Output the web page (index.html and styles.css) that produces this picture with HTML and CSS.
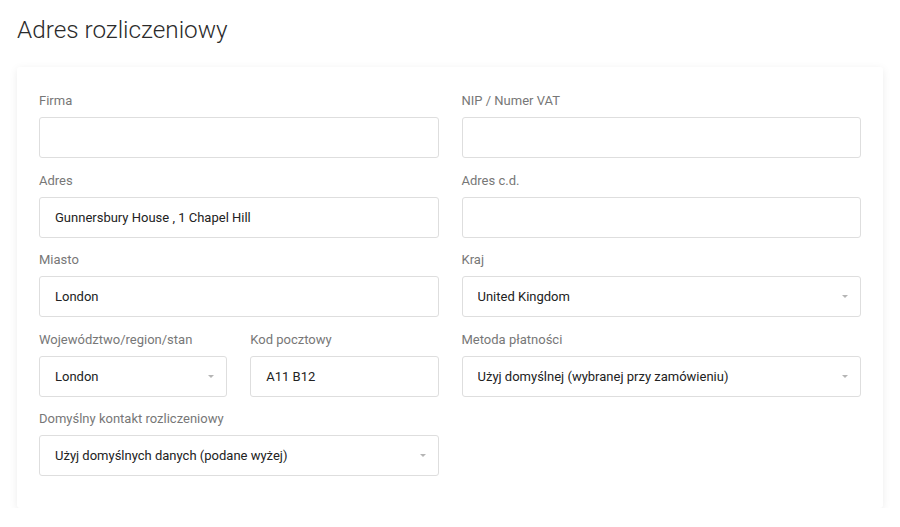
FILE: index.html
```html
<!DOCTYPE html>
<html lang="pl">
<head>
    <meta charset="UTF-8">
    <meta name="viewport" content="width=device-width, initial-scale=1.0">
    <title>Adres rozliczeniowy</title>
    <link rel="stylesheet" href="styles.css">
</head>
<body>
    <div class="page">
        <h1 class="page-title">Adres rozliczeniowy</h1>

        <form class="card billing-form">
            <div class="field">
                <label for="company">Firma</label>
                <input type="text" id="company">
            </div>
            <div class="field">
                <label for="vat">NIP / Numer VAT</label>
                <input type="text" id="vat">
            </div>

            <div class="field">
                <label for="address">Adres</label>
                <input type="text" id="address" value="Gunnersbury House , 1 Chapel Hill">
            </div>
            <div class="field">
                <label for="address2">Adres c.d.</label>
                <input type="text" id="address2">
            </div>

            <div class="field">
                <label for="city">Miasto</label>
                <input type="text" id="city" value="London">
            </div>
            <div class="field">
                <label for="country">Kraj</label>
                <div class="select">
                    <select id="country">
                        <option>United Kingdom</option>
                    </select>
                </div>
            </div>

            <div class="field-pair">
                <div class="field">
                    <label for="region">Województwo/region/stan</label>
                    <div class="select">
                        <select id="region">
                            <option>London</option>
                        </select>
                    </div>
                </div>
                <div class="field">
                    <label for="postcode">Kod pocztowy</label>
                    <input type="text" id="postcode" value="A11 B12">
                </div>
            </div>
            <div class="field">
                <label for="payment">Metoda płatności</label>
                <div class="select">
                    <select id="payment">
                        <option>Użyj domyślnej (wybranej przy zamówieniu)</option>
                    </select>
                </div>
            </div>

            <div class="field">
                <label for="contact">Domyślny kontakt rozliczeniowy</label>
                <div class="select">
                    <select id="contact">
                        <option>Użyj domyślnych danych (podane wyżej)</option>
                    </select>
                </div>
            </div>
        </form>
    </div>
</body>
</html>
```

FILE: styles.css
```css
body {
    font-family: Roboto, "Noto Sans", Arial, sans-serif;
    margin: 0;
    padding: 0;
    background-color: #fff;
    color: #222;
}

.page {
    padding: 14px 17px 0 17px;
    width: 866px;
}

.page-title {
    font-size: 24.3px;
    font-weight: 300;
    line-height: 32px;
    color: #2b2b2b;
    margin: 0 0 21px 0;
}

.card {
    background: #fff;
    border-radius: 3px;
    box-shadow: 0 2px 8px rgba(0, 0, 0, 0.08);
}

.billing-form {
    display: grid;
    grid-template-columns: 1fr 1fr;
    column-gap: 23px;
    row-gap: 12.5px;
    padding: 24px 22px 32px 22px;
}

.field-pair {
    display: grid;
    grid-template-columns: 1fr 1fr;
    column-gap: 23px;
}

.field label {
    display: block;
    font-size: 13px;
    line-height: 20px;
    color: #777;
    margin-bottom: 6px;
}

.field input,
.field select {
    display: block;
    box-sizing: border-box;
    width: 100%;
    height: 41px;
    padding: 0 15px;
    font-family: inherit;
    font-size: 13px;
    color: #222;
    background: #fff;
    border: 1px solid #dedede;
    border-radius: 3px;
    outline: none;
}

.select {
    position: relative;
}

.field select {
    appearance: none;
    -webkit-appearance: none;
    padding-right: 34px;
}

/* small grey caret on the right of each dropdown */
.select::after {
    content: "";
    position: absolute;
    right: 13px;
    top: 19px;
    border-left: 3px solid transparent;
    border-right: 3px solid transparent;
    border-top: 3px solid #b5b5b5;
    pointer-events: none;
}
```
